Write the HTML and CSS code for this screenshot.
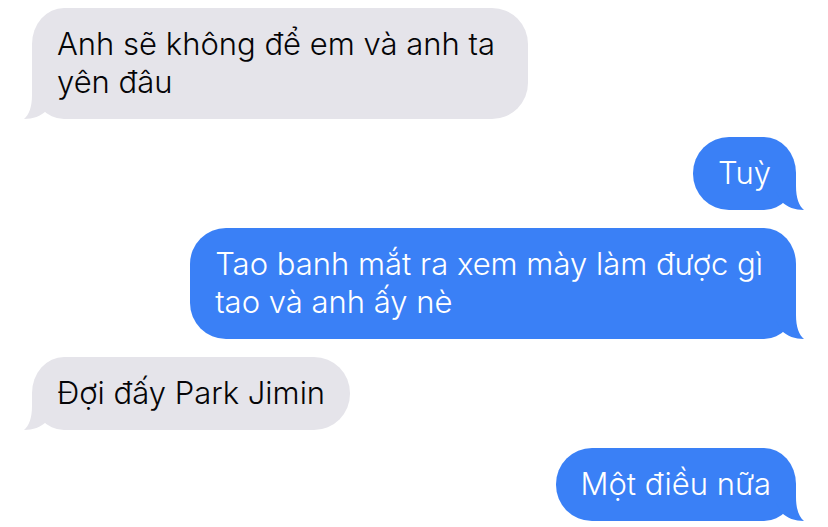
FILE: index.html
```html
<!DOCTYPE html>
<html lang="vi">
<head>
    <meta charset="UTF-8">
    <meta name="viewport" content="width=device-width, initial-scale=1.0">
    <title>Messages</title>
    <link rel="stylesheet" href="styles.css">
</head>
<body>
    <main class="chat">
        <div class="bubble received multiline">
            Anh sẽ không để em và anh ta<br>yên đâu
            <svg class="tail" viewBox="0 0 28 36" aria-hidden="true"><path d="M20 0V12C20 24 23 32 28 36C19 36 11 33 6 28L0 18V0Z"/></svg>
        </div>
        <div class="bubble sent">
            Tuỳ
            <svg class="tail" viewBox="0 0 28 36" aria-hidden="true"><path d="M20 0V12C20 24 23 32 28 36C19 36 11 33 6 28L0 18V0Z"/></svg>
        </div>
        <div class="bubble sent multiline">
            Tao banh mắt ra xem mày làm được gì<br>tao và anh ấy nè
            <svg class="tail" viewBox="0 0 28 36" aria-hidden="true"><path d="M20 0V12C20 24 23 32 28 36C19 36 11 33 6 28L0 18V0Z"/></svg>
        </div>
        <div class="bubble received">
            Đợi đấy Park Jimin
            <svg class="tail" viewBox="0 0 28 36" aria-hidden="true"><path d="M20 0V12C20 24 23 32 28 36C19 36 11 33 6 28L0 18V0Z"/></svg>
        </div>
        <div class="bubble sent">
            Một điều nữa
            <svg class="tail" viewBox="0 0 28 36" aria-hidden="true"><path d="M20 0V12C20 24 23 32 28 36C19 36 11 33 6 28L0 18V0Z"/></svg>
        </div>
    </main>
</body>
</html>
```
FILE: styles.css
```css
* { margin: 0; padding: 0; box-sizing: border-box; }

body {
    font-family: Inter, "Liberation Sans", sans-serif;
    background: #fff;
    color: #050507;
}

.chat {
    display: flex;
    flex-direction: column;
    gap: 18px;
    padding: 8px 32px 6px;
}

.bubble {
    position: relative;
    padding: 17px 25px 18px;
    font-size: 31px;
    font-weight: 350;
    line-height: 38px;
}

.multiline {
    padding-right: 33px;
}

.received {
    align-self: flex-start;
    background: #e5e4ea;
    border-radius: 32px 36px 36px 32px / 36px;
}

.sent {
    align-self: flex-end;
    background: #3a80f6;
    border-radius: 36px 32px 32px 36px / 36px;
    color: #fff;
    font-weight: 300;
}

/* little hook that hangs off the bottom corner */
.tail {
    position: absolute;
    right: -8px;
    bottom: 0;
    width: 28px;
    height: 36px;
    fill: #3a80f6;
}

.received .tail {
    right: auto;
    left: -8px;
    transform: scaleX(-1);
    fill: #e5e4ea;
}
```
